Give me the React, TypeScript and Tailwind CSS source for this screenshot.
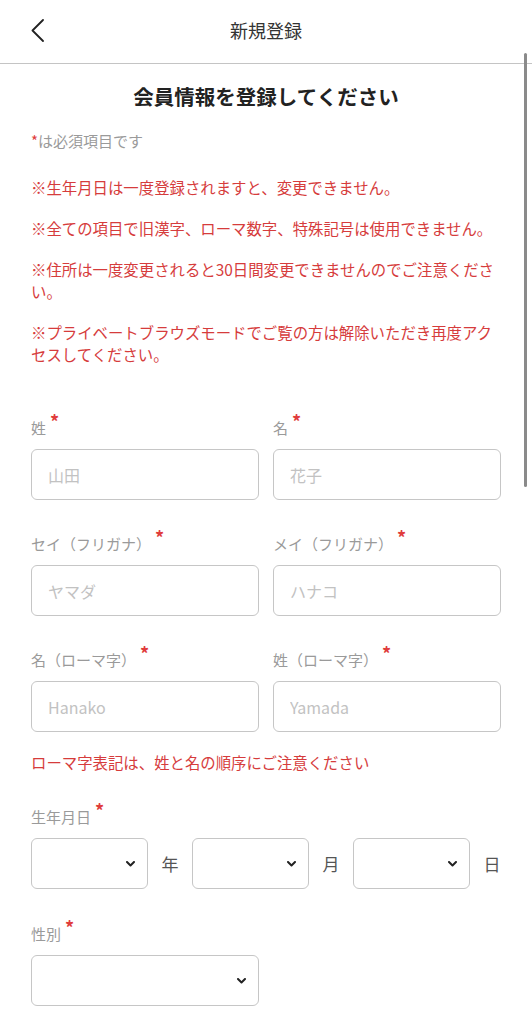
import React from "react";

const Star = () => (
  <span className="ml-[4px] -mt-[5px] text-[18px] leading-[18px] font-bold text-[#e03c3c]">*</span>
);

const Label = ({ text }: { text: string }) => (
  <div className="flex items-start h-[22px]">
    <span className="text-[15px] leading-[22px] text-[#9a9a9a]">{text}</span>
    <Star />
  </div>
);

const Field = ({ label, placeholder }: { label: string; placeholder: string }) => (
  <div className="flex flex-col">
    <Label text={label} />
    <input
      placeholder={placeholder}
      className="mt-[10px] h-[51px] w-full rounded-[6px] border border-[#c6c6c6] px-[16px] text-[16px] text-[#333] outline-none placeholder:text-[#c2c2c2]"
    />
  </div>
);

const Chevron = () => (
  <svg width="9" height="6" viewBox="0 0 9 6" className="pointer-events-none absolute right-[13px] top-1/2 -translate-y-1/2">
    <path d="M1 1l3.5 3.5L8 1" fill="none" stroke="#222" strokeWidth="2" strokeLinecap="round" strokeLinejoin="round" />
  </svg>
);

const Select = ({ width }: { width: string }) => (
  <div className={`relative shrink-0 ${width}`}>
    <select className="h-[51px] w-full appearance-none rounded-[6px] border border-[#c6c6c6] bg-white px-3 outline-none" defaultValue="">
      <option value=""></option>
    </select>
    <Chevron />
  </div>
);

const notes = [
  "※生年月日は一度登録されますと、変更できません。",
  "※全ての項目で旧漢字、ローマ数字、特殊記号は使用できません。",
  "※住所は一度変更されると30日間変更できませんのでご注意ください。",
  "※プライベートブラウズモードでご覧の方は解除いただき再度アクセスしてください。",
];

export default function App() {
  return (
    <div className="relative w-[532px] min-h-[1024px] overflow-hidden bg-white font-['Noto_Sans_CJK_JP',sans-serif]">
      <header className="grid h-[64px] grid-cols-[1fr_auto_1fr] items-center border-b border-[#c4c4c4] pb-[2px]">
        <div className="pl-[31px]">
          <svg width="13" height="23" viewBox="0 0 13 23">
            <path d="M12 1L1.5 11.5 12 22" fill="none" stroke="#222" strokeWidth="1.8" strokeLinecap="round" strokeLinejoin="round" />
          </svg>
        </div>
        <h1 className="text-[18px] text-[#333]">新規登録</h1>
        <div />
      </header>

      <main className="px-[31px] pb-10">
        <h2 className="mt-[18px] text-center text-[20.5px] font-bold leading-[28px] text-[#222]">会員情報を登録してください</h2>
        <p className="mt-[21px] text-[15px] leading-[20px] text-[#9a9a9a]">
          <span className="text-[#e03c3c]">*</span>は必須項目です
        </p>

        <div className="mt-[25px] flex w-[470px] flex-col gap-[19px] text-[15.4px] leading-[22px] text-[#d63c3c]">
          {notes.map((n) => (
            <p key={n}>{n}</p>
          ))}
        </div>

        <div className="mt-[52px] grid grid-cols-2 gap-x-[14px] gap-y-[33px]">
          <Field label="姓" placeholder="山田" />
          <Field label="名" placeholder="花子" />
          <Field label="セイ（フリガナ）" placeholder="ヤマダ" />
          <Field label="メイ（フリガナ）" placeholder="ハナコ" />
          <Field label="名（ローマ字）" placeholder="Hanako" />
          <Field label="姓（ローマ字）" placeholder="Yamada" />
        </div>

        <p className="mt-[19px] text-[15.4px] leading-[22px] text-[#d63c3c]">ローマ字表記は、姓と名の順序にご注意ください</p>

        <div className="mt-[33px]">
          <Label text="生年月日" />
          <div className="mt-[10px] flex items-center text-[17px] text-[#555]">
            <Select width="w-[117px]" />
            <span className="mx-[13px] w-[18px] shrink-0 text-center">年</span>
            <Select width="w-[117px]" />
            <span className="mx-[13px] w-[18px] shrink-0 text-center">月</span>
            <Select width="w-[117px]" />
            <span className="ml-[13px] w-[18px] shrink-0 text-center">日</span>
          </div>
        </div>

        <div className="mt-[34px]">
          <Label text="性別" />
          <div className="mt-[10px]">
            <Select width="w-[228px]" />
          </div>
        </div>
      </main>

      <div className="absolute right-[5px] top-[53px] h-[434px] w-[3px] rounded-full bg-[#8a8a8a]" />
    </div>
  );
}
